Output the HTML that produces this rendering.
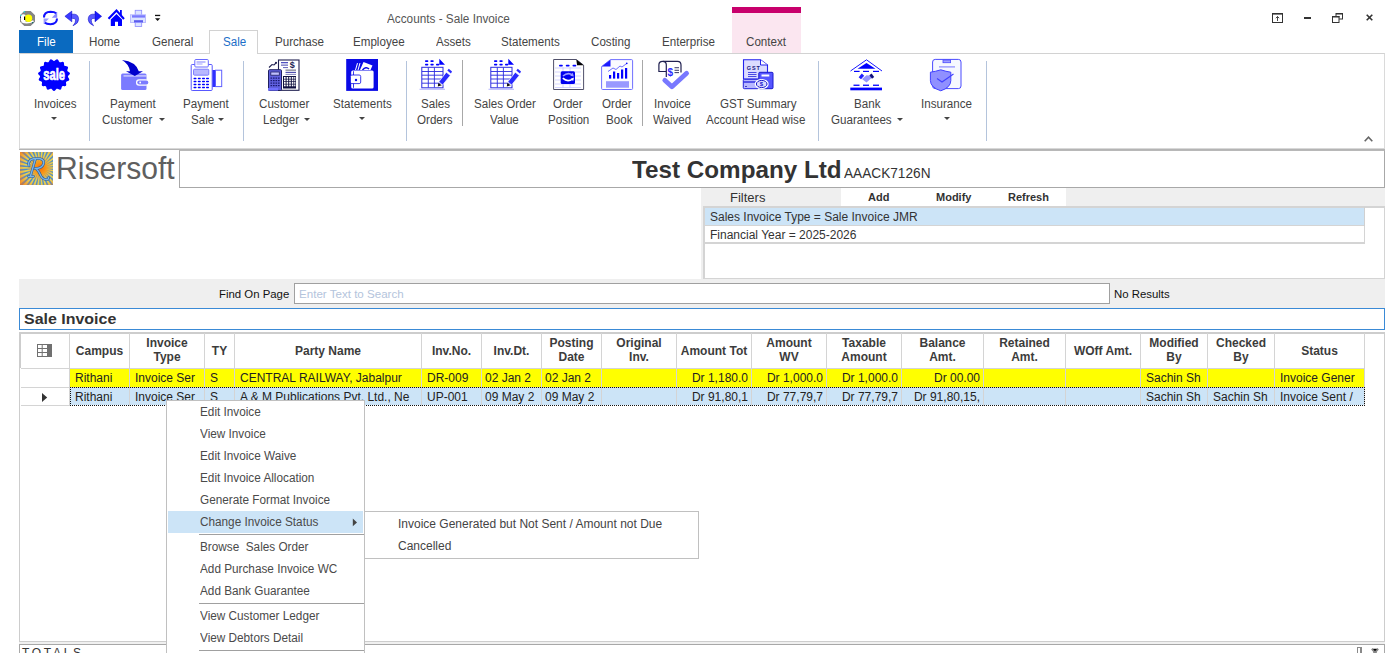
<!DOCTYPE html>
<html><head><meta charset="utf-8">
<style>
*{box-sizing:border-box;margin:0;padding:0}
html,body{width:1397px;height:653px;overflow:hidden;background:#fff;font-family:"Liberation Sans",sans-serif;position:relative}
.a{position:absolute}
.t{position:absolute;white-space:nowrap;line-height:1}
svg{position:absolute;overflow:visible}
.tab{position:absolute;top:35.5px;font-size:12px;color:#444;white-space:nowrap;line-height:1;transform:scaleX(0.967);transform-origin:0 0}
.rl{position:absolute;font-size:12px;color:#444;white-space:nowrap;line-height:1;transform:scaleX(0.967);transform-origin:0 0}
.sep{position:absolute;top:61px;width:1px;height:80px;background:#b4c4dc}
.sepg{position:absolute;top:60px;width:1px;height:66px;background:#a8a8a8}
.dd{position:absolute;width:0;height:0;border-left:3px solid transparent;border-right:3px solid transparent;border-top:3px solid #444}
.gh{position:absolute;font-size:12px;font-weight:bold;color:#3c3c3c;text-align:center;line-height:14.4px;white-space:nowrap}
.gc{position:absolute;font-size:12px;color:#222;white-space:nowrap;line-height:1}
.vl{position:absolute;top:333px;width:1px;height:73px;background:#d4d4d4}
.mi{position:absolute;left:200px;font-size:12px;color:#4a4a4a;white-space:nowrap;line-height:1;transform:scaleX(0.98);transform-origin:0 0}
</style></head><body>

<!-- ===== Title bar ===== -->
<div class="t" style="left:387px;top:12.5px;font-size:12px;color:#555;transform:scaleX(0.98);transform-origin:0 0">Accounts - Sale Invoice</div>

<!-- QAT icons -->
<svg style="left:20px;top:11px" width="15" height="15" viewBox="0 0 15 15">
  <polygon points="4.3,0 10.7,0 15,4.3 15,10.7 10.7,15 4.3,15 0,10.7 0,4.3" fill="#858585"/>
  <path d="M1,4 Q3.5,2.5 5.5,4 L5.5,11 Q3,11.5 1,10 Z" fill="#fff"/>
  <path d="M1.5,10.5 Q7,13 13.5,10" stroke="#fff" stroke-width="1.6" fill="none"/>
  <circle cx="8.5" cy="7.3" r="3.7" fill="#ffff00"/>
  <rect x="4" y="5.5" width="1.2" height="3.5" fill="#000"/>
  <rect x="3.7" y="0.2" width="1.3" height="1.3" fill="#20e0f0"/>
  <rect x="0.2" y="3.7" width="1.3" height="1.3" fill="#20e0f0"/>
  <rect x="0" y="5.8" width="1" height="1" fill="#101080"/>
  <rect x="12" y="11" width="1.2" height="1.2" fill="#107070"/>
</svg>
<svg style="left:43px;top:11px" width="15" height="14" viewBox="0 0 15 14">
  <path d="M1,6.5 Q1,1 7.5,0.8 Q11.5,0.8 13.5,2.5" stroke="#1010ff" stroke-width="2" fill="none"/>
  <polygon points="14.2,1 14.2,6.8 8.8,6.8" fill="#8a8aff"/>
  <path d="M14,7.5 Q14,13 7.5,13.2 Q3.5,13.2 1.5,11.5" stroke="#1010ff" stroke-width="2" fill="none"/>
  <polygon points="0.6,7.5 6,7.5 0.6,13" fill="#9a9aff"/>
</svg>
<svg style="left:64px;top:10px" width="16" height="17" viewBox="0 0 16 17">
  <polygon points="0.9,6.3 7.8,1.1 7.8,11.8" fill="#3a3aff" stroke="#0000c0" stroke-width="0.5"/>
  <path d="M7.5,4.2 L10.5,4.2 Q14.6,4.5 14.6,9.5 Q14.6,13.5 9,15.8 Q11.8,12.5 11.6,10 Q11.3,8 7.5,8.3 Z" fill="#5a5aff" stroke="#0000c0" stroke-width="0.5"/>
</svg>
<svg style="left:86px;top:10px" width="16" height="17" viewBox="0 0 16 17">
  <polygon points="15.6,6.3 9,1.1 9,11.8" fill="#1a1aff" stroke="#0000c0" stroke-width="0.5"/>
  <path d="M9.3,4.2 L6.5,4.2 Q2.2,4.5 2.2,9.5 Q2.2,13.5 7.6,15.8 Q5,12.5 5.2,10 Q5.5,8 9.3,8.3 Z" fill="#5a5aff" stroke="#0000c0" stroke-width="0.5"/>
</svg>
<svg style="left:108px;top:10px" width="17" height="17" viewBox="0 0 17 17">
  <path d="M0.5,8.8 L8.5,0.5 L16,9" stroke="#0000ff" stroke-width="2.1" fill="none"/>
  <rect x="12" y="0" width="1.8" height="5.5" fill="#0000ff"/>
  <path d="M2.8,9.6 L8.5,3.9 L14,9.6 L14,16 L10,16 L10,11.8 L7,11.8 L7,16 L2.8,16 Z" fill="#0000ff"/>
</svg>
<svg style="left:130px;top:10px" width="16" height="17" viewBox="0 0 16 17">
  <rect x="5.2" y="0.3" width="6.5" height="5" fill="#dce4ff" stroke="#8a8aff" stroke-width="0.8"/>
  <rect x="0.4" y="4.8" width="15.2" height="7.7" fill="#dce4ff" stroke="#b0b0ff" stroke-width="0.8"/>
  <rect x="2" y="5.2" width="13" height="2.4" fill="#7a7aff"/>
  <rect x="4" y="10.2" width="9" height="2.3" fill="#5a5aee"/>
  <rect x="5.2" y="12.5" width="6.5" height="4" fill="#dce4ff" stroke="#8a8aff" stroke-width="0.8"/>
</svg>
<svg style="left:154px;top:14px" width="7" height="8" viewBox="0 0 7 8">
  <rect x="1" y="0.8" width="5.2" height="1.3" fill="#111"/>
  <polygon points="1,4.2 6.2,4.2 3.6,7.1" fill="#111"/>
</svg>

<!-- window controls -->
<svg style="left:1272px;top:13px" width="11" height="10" viewBox="0 0 11 10">
  <rect x="0.5" y="0.5" width="10" height="9" fill="none" stroke="#333" stroke-width="1"/>
  <rect x="0" y="0" width="11" height="1.6" fill="#333"/>
  <path d="M5.5,8 L5.5,3.5 M3.8,5.2 L5.5,3.5 L7.2,5.2" stroke="#333" stroke-width="0.9" fill="none"/>
</svg>
<div class="a" style="left:1304px;top:17px;width:7px;height:2px;background:#333"></div>
<svg style="left:1332px;top:13px" width="11" height="10" viewBox="0 0 11 10">
  <rect x="4" y="0.5" width="6.5" height="5.5" fill="none" stroke="#333" stroke-width="1"/>
  <rect x="4" y="0" width="7" height="1.5" fill="#333"/>
  <rect x="0.5" y="3.5" width="6.5" height="6" fill="#fff" stroke="#333" stroke-width="1"/>
  <rect x="0" y="3" width="7.5" height="1.5" fill="#333"/>
</svg>
<svg style="left:1366px;top:14px" width="7" height="7" viewBox="0 0 7 7">
  <path d="M0.7,0.7 L6.3,6.3 M6.3,0.7 L0.7,6.3" stroke="#333" stroke-width="1.6"/>
</svg>

<!-- ===== Tabs ===== -->
<div class="a" style="left:732px;top:7px;width:69px;height:46px;background:#fbe6f0"></div>
<div class="a" style="left:732px;top:7px;width:69px;height:6px;background:#c8006c"></div>
<div class="a" style="left:19px;top:30px;width:54px;height:23px;background:#0a6ac0"></div>
<div class="tab" style="left:37px;color:#fff">File</div>
<div class="tab" style="left:89px">Home</div>
<div class="tab" style="left:152px">General</div>
<div class="tab" style="left:275px">Purchase</div>
<div class="tab" style="left:353px">Employee</div>
<div class="tab" style="left:436px">Assets</div>
<div class="tab" style="left:501px">Statements</div>
<div class="tab" style="left:591px">Costing</div>
<div class="tab" style="left:662px">Enterprise</div>
<div class="tab" style="left:746px">Context</div>

<!-- ===== Ribbon ===== -->
<div class="a" style="left:19px;top:53px;width:1366px;height:96px;border:1px solid #dadada;border-top-color:#d2d2d2;border-bottom:none;background:#fff"></div>
<div class="a" style="left:19px;top:148px;width:1366px;height:1px;background:#d8d8d8"></div><div class="a" style="left:19px;top:149px;width:1366px;height:1px;background:#b4b4b4"></div>
<div class="a" style="left:209px;top:30px;width:49px;height:24px;border:1px solid #d2d2d2;border-bottom:none;background:#fff"></div>
<div class="tab" style="left:223px;color:#1a6ec8">Sale</div>

<!-- separators -->
<div class="sep" style="left:89px"></div>
<div class="sep" style="left:243px"></div>
<div class="sep" style="left:406px"></div>
<div class="sepg" style="left:462px"></div>
<div class="sepg" style="left:642px"></div>
<div class="sep" style="left:818px"></div>
<div class="sep" style="left:986px"></div>

<!-- sale badge -->
<svg style="left:38px;top:59px" width="32" height="32" viewBox="0 0 32 32">
  <polygon fill="#0000ff" points="16.00,2.00 16.29,1.95 16.59,1.82 16.90,1.62 17.23,1.36 17.57,1.08 17.92,0.81 18.28,0.58 18.64,0.41 18.99,0.33 19.33,0.35 19.64,0.47 19.93,0.69 20.19,0.99 20.42,1.34 20.64,1.73 20.83,2.13 21.02,2.49 21.22,2.81 21.44,3.05 21.69,3.21 21.98,3.29 22.31,3.29 22.68,3.23 23.08,3.13 23.50,3.01 23.93,2.91 24.35,2.84 24.75,2.83 25.10,2.90 25.40,3.06 25.64,3.29 25.82,3.61 25.94,3.99 26.00,4.41 26.04,4.85 26.06,5.29 26.08,5.70 26.14,6.07 26.24,6.38 26.40,6.63 26.63,6.82 26.93,6.95 27.29,7.05 27.70,7.12 28.14,7.18 28.57,7.26 28.98,7.37 29.35,7.53 29.64,7.74 29.86,8.00 29.98,8.32 30.01,8.68 29.96,9.07 29.85,9.48 29.70,9.90 29.54,10.31 29.40,10.69 29.30,11.05 29.27,11.38 29.31,11.67 29.45,11.94 29.67,12.18 29.96,12.42 30.30,12.65 30.67,12.88 31.04,13.13 31.37,13.40 31.64,13.69 31.83,14.00 31.91,14.33 31.90,14.67 31.78,15.01 31.57,15.35 31.31,15.68 31.00,16.00 30.69,16.31 30.40,16.60 30.16,16.89 30.00,17.18 29.92,17.46 29.94,17.76 30.04,18.07 30.21,18.40 30.43,18.75 30.67,19.12 30.90,19.50 31.10,19.88 31.23,20.25 31.27,20.61 31.22,20.94 31.06,21.25 30.82,21.51 30.49,21.74 30.11,21.93 29.70,22.10 29.29,22.26 28.91,22.41 28.58,22.57 28.31,22.77 28.12,23.00 28.02,23.28 27.98,23.60 28.00,23.98 28.06,24.38 28.14,24.82 28.19,25.26 28.22,25.68 28.18,26.08 28.07,26.42 27.89,26.71 27.63,26.92 27.30,27.06 26.91,27.14 26.48,27.16 26.04,27.15 25.60,27.12 25.19,27.10 24.81,27.12 24.49,27.19 24.23,27.33 24.02,27.54 23.85,27.82 23.72,28.17 23.61,28.57 23.50,28.99 23.38,29.42 23.22,29.81 23.03,30.16 22.79,30.43 22.51,30.62 22.18,30.70 21.82,30.70 21.43,30.61 21.03,30.46 20.64,30.27 20.25,30.06 19.88,29.88 19.53,29.75 19.21,29.68 18.91,29.69 18.63,29.80 18.37,29.99 18.11,30.26 17.84,30.58 17.57,30.92 17.28,31.26 16.98,31.56 16.66,31.80 16.33,31.95 16.00,32.00 15.67,31.95 15.34,31.80 15.02,31.56 14.72,31.26 14.43,30.92 14.16,30.58 13.89,30.26 13.63,29.99 13.37,29.80 13.09,29.69 12.79,29.68 12.47,29.75 12.12,29.88 11.75,30.06 11.36,30.27 10.97,30.46 10.57,30.61 10.18,30.70 9.82,30.70 9.49,30.62 9.21,30.43 8.97,30.16 8.78,29.81 8.62,29.42 8.50,28.99 8.39,28.57 8.28,28.17 8.15,27.82 7.98,27.54 7.77,27.33 7.51,27.19 7.19,27.12 6.81,27.10 6.40,27.12 5.96,27.15 5.52,27.16 5.09,27.14 4.70,27.06 4.37,26.92 4.11,26.71 3.93,26.42 3.82,26.08 3.78,25.68 3.81,25.26 3.86,24.82 3.94,24.38 4.00,23.98 4.02,23.60 3.98,23.28 3.88,23.00 3.69,22.77 3.42,22.57 3.09,22.41 2.71,22.26 2.30,22.10 1.89,21.93 1.51,21.74 1.18,21.51 0.94,21.25 0.78,20.94 0.73,20.61 0.77,20.25 0.90,19.88 1.10,19.50 1.33,19.12 1.57,18.75 1.79,18.40 1.96,18.07 2.06,17.76 2.08,17.46 2.00,17.18 1.84,16.89 1.60,16.60 1.31,16.31 1.00,16.00 0.69,15.68 0.43,15.35 0.22,15.01 0.10,14.67 0.09,14.33 0.17,14.00 0.36,13.69 0.63,13.40 0.96,13.13 1.33,12.88 1.70,12.65 2.04,12.42 2.33,12.18 2.55,11.94 2.69,11.67 2.73,11.38 2.70,11.05 2.60,10.69 2.46,10.31 2.30,9.90 2.15,9.48 2.04,9.07 1.99,8.68 2.02,8.32 2.14,8.00 2.36,7.74 2.65,7.53 3.02,7.37 3.43,7.26 3.86,7.18 4.30,7.12 4.71,7.05 5.07,6.95 5.37,6.82 5.60,6.63 5.76,6.38 5.86,6.07 5.92,5.70 5.94,5.29 5.96,4.85 6.00,4.41 6.06,3.99 6.18,3.61 6.36,3.29 6.60,3.06 6.90,2.90 7.25,2.83 7.65,2.84 8.07,2.91 8.50,3.01 8.92,3.13 9.32,3.23 9.69,3.29 10.02,3.29 10.31,3.21 10.56,3.05 10.78,2.81 10.98,2.49 11.17,2.13 11.36,1.73 11.58,1.34 11.81,0.99 12.07,0.69 12.36,0.47 12.67,0.35 13.01,0.33 13.36,0.41 13.72,0.58 14.08,0.81 14.43,1.08 14.77,1.36 15.10,1.62 15.41,1.82 15.71,1.95"/>
  <text x="16.2" y="20.8" font-family="Liberation Sans" font-weight="bold" font-size="16.5" fill="#fff" stroke="#fff" stroke-width="0.7" text-anchor="middle" transform="translate(16.2 0) scale(0.68 1) translate(-16.2 0)">sale</text>
</svg>
<div class="rl" style="left:34px;top:98px">Invoices</div>
<div class="dd" style="left:51px;top:117px"></div>

<!-- Payment Customer -->
<svg style="left:115px;top:55px" width="40" height="40" viewBox="0 0 40 40">
  <rect x="6.1" y="18.4" width="25.4" height="16.6" rx="1.5" fill="#7b7bff"/>
  <rect x="8.5" y="20.5" width="23" height="0.9" fill="#fff"/>
  <rect x="21" y="24.3" width="12.5" height="6.4" rx="3" fill="#fff"/>
  <rect x="22.3" y="25.4" width="11" height="4.2" rx="2" fill="#7b7bff"/>
  <circle cx="25.2" cy="27.5" r="0.9" fill="#fff"/>
  <path d="M7,4.9 Q21,6.5 23.8,16.3 L28,16.3 L19.8,21 L11,16.3 L15,16.3 Q14,9 7,4.9 Z" fill="#0000cc"/>
</svg>
<div class="rl" style="left:110px;top:98px">Payment</div>
<div class="rl" style="left:102px;top:114px">Customer</div>
<div class="dd" style="left:159px;top:118px"></div>

<!-- Payment Sale -->
<svg style="left:186px;top:55px" width="40" height="40" viewBox="0 0 40 40">
  <rect x="5.2" y="9.5" width="21" height="26" rx="1" fill="#fff" stroke="#5858ff" stroke-width="1"/>
  <rect x="8.8" y="4.5" width="13.5" height="7.5" rx="1" fill="#fff" stroke="#6a6aff" stroke-width="1"/>
  <rect x="10.5" y="6.5" width="9" height="1" fill="#8080ff"/>
  <rect x="10.5" y="8.5" width="6" height="1" fill="#a0a0ff"/>
  <rect x="7.5" y="14.2" width="15.3" height="6" rx="1" fill="#b8b8ff" stroke="#6a6aff" stroke-width="0.8"/>
  <g fill="#0000ff">
    <rect x="7.5" y="22.8" width="3" height="1.4" rx="0.6"/><rect x="11.8" y="22.8" width="3" height="1.4" rx="0.6"/><rect x="16" y="22.8" width="3" height="1.4" rx="0.6"/><rect x="20" y="22.8" width="3" height="1.4" rx="0.6"/>
    <rect x="7.5" y="25.8" width="3" height="1.4" rx="0.6"/><rect x="11.8" y="25.8" width="3" height="1.4" rx="0.6"/><rect x="16" y="25.8" width="3" height="1.4" rx="0.6"/><rect x="20" y="25.8" width="3" height="1.4" rx="0.6"/>
    <rect x="7.5" y="28.8" width="3" height="1.4" rx="0.6"/><rect x="11.8" y="28.8" width="3" height="1.4" rx="0.6"/><rect x="16" y="28.8" width="3" height="1.4" rx="0.6"/><rect x="20" y="28.8" width="3" height="1.4" rx="0.6"/>
    <rect x="7.5" y="31.8" width="3" height="1.4" rx="0.6"/><rect x="11.8" y="31.8" width="3" height="1.4" rx="0.6"/><rect x="16" y="31.8" width="3" height="1.4" rx="0.6"/><rect x="20" y="31.8" width="3" height="1.4" rx="0.6"/>
  </g>
  <rect x="26.5" y="15" width="2.5" height="17" fill="#3030ff"/>
  <rect x="29.5" y="15.2" width="6.2" height="16.4" fill="#fff" stroke="#6060ff" stroke-width="1"/>
</svg>
<div class="rl" style="left:183px;top:98px">Payment</div>
<div class="rl" style="left:191px;top:114px">Sale</div>
<div class="dd" style="left:218px;top:118px"></div>

<!-- Customer Ledger -->
<svg style="left:264px;top:55px" width="40" height="40" viewBox="0 0 40 40">
  <rect x="14.5" y="5" width="20.5" height="30.3" fill="#fff" stroke="#202050" stroke-width="1.1"/>
  <rect x="17" y="7" width="7" height="1.3" fill="#5050c0"/>
  <rect x="17" y="9.5" width="7" height="1.3" fill="#7070c0"/>
  <rect x="19" y="12" width="5" height="1.1" fill="#7070c0"/>
  <text x="25.8" y="13.2" font-family="Liberation Sans" font-weight="bold" font-size="9" fill="#1a1a50">$</text>
  <rect x="21.5" y="14.5" width="10.5" height="1.3" fill="#808090"/>
  <rect x="21.5" y="16.8" width="10.5" height="1.3" fill="#5050b0"/>
  <rect x="21.5" y="19" width="10.5" height="1" fill="#9090c0"/>
  <rect x="19" y="21" width="13" height="12.5" fill="#101040"/>
  <g fill="#fff">
    <rect x="20" y="22" width="1.6" height="1.8"/><rect x="22.6" y="22" width="1.6" height="1.8"/><rect x="25.2" y="22" width="1.6" height="1.8"/><rect x="27.8" y="22" width="1.6" height="1.8"/><rect x="30.2" y="22" width="1.2" height="1.8"/>
    <rect x="20" y="24.5" width="1.6" height="1.8"/><rect x="22.6" y="24.5" width="1.6" height="1.8"/><rect x="25.2" y="24.5" width="1.6" height="1.8"/><rect x="27.8" y="24.5" width="1.6" height="1.8"/><rect x="30.2" y="24.5" width="1.2" height="1.8"/>
    <rect x="20" y="27" width="1.6" height="1.8"/><rect x="22.6" y="27" width="1.6" height="1.8"/><rect x="25.2" y="27" width="1.6" height="1.8"/><rect x="27.8" y="27" width="1.6" height="1.8"/><rect x="30.2" y="27" width="1.2" height="1.8"/>
    <rect x="20" y="29.5" width="1.6" height="1.8"/><rect x="22.6" y="29.5" width="1.6" height="1.8"/><rect x="25.2" y="29.5" width="1.6" height="1.8"/><rect x="27.8" y="29.5" width="1.6" height="1.8"/><rect x="30.2" y="29.5" width="1.2" height="1.8"/>
  </g>
  <path d="M5,12.5 L8,9.5 L10,10 L12.5,7.5" stroke="#202050" stroke-width="1.1" fill="none"/>
  <circle cx="12" cy="7.7" r="1" fill="#202050"/>
  <rect x="4.5" y="14.7" width="13" height="20.8" rx="1" fill="#6060e0" stroke="#202060" stroke-width="1"/>
  <rect x="6.8" y="17" width="8.5" height="3.2" fill="#c0c0ff" stroke="#202060" stroke-width="0.8"/>
  <g fill="#1a1a70">
    <rect x="6.5" y="22.5" width="1.6" height="1.2"/><rect x="9" y="22.5" width="1.6" height="1.2"/><rect x="11.5" y="22.5" width="1.6" height="1.2"/><rect x="14" y="22.5" width="1.6" height="1.2"/>
    <rect x="6.5" y="25" width="1.6" height="1.2"/><rect x="9" y="25" width="1.6" height="1.2"/><rect x="11.5" y="25" width="1.6" height="1.2"/><rect x="14" y="25" width="1.6" height="1.2"/>
    <rect x="6.5" y="27.5" width="1.6" height="1.2"/><rect x="9" y="27.5" width="1.6" height="1.2"/><rect x="11.5" y="27.5" width="1.6" height="1.2"/><rect x="14" y="27.5" width="1.6" height="1.2"/>
    <rect x="6.5" y="30" width="1.6" height="1.2"/><rect x="9" y="30" width="1.6" height="1.2"/><rect x="11.5" y="30" width="1.6" height="1.2"/><rect x="14" y="30" width="1.6" height="1.2"/>
  </g>
  <rect x="4" y="33" width="10" height="2.6" fill="#7070ff"/>
</svg>
<div class="rl" style="left:259px;top:98px">Customer</div>
<div class="rl" style="left:263px;top:114px">Ledger</div>
<div class="dd" style="left:304px;top:118px"></div>

<!-- Statements -->
<svg style="left:342px;top:55px" width="40" height="40" viewBox="0 0 40 40">
  <rect x="4.2" y="4" width="31.8" height="31.9" fill="#0a0ae6"/>
  <path d="M13,15 L15,8 L16,8.3 L14,15 Z M15.5,15 L17.5,8 L18.5,8.3 L16.5,15 Z" fill="#fff"/>
  <path d="M18,15 L21.5,7 L30.5,10.5 L28.5,15 Z" fill="#fff"/>
  <path d="M20.5,15 Q24,11 27,14" stroke="#0a0ae6" stroke-width="1.5" fill="none"/>
  <rect x="9.2" y="15.6" width="22.4" height="17.8" rx="1.5" fill="#fff"/>
  <rect x="11.2" y="16.2" width="0.8" height="16.6" fill="#0a0ae6"/>
  <rect x="8.4" y="20" width="10.3" height="8.6" rx="1.5" fill="#fff" stroke="#0a0ae6" stroke-width="0.8"/>
  <circle cx="14" cy="25" r="1.2" fill="#0a0ae6"/>
</svg>
<div class="rl" style="left:333px;top:98px">Statements</div>
<div class="dd" style="left:359px;top:117px"></div>

<!-- Sales Orders -->
<svg id="so1" style="left:415px;top:55px" width="40" height="40" viewBox="0 0 40 40">
  <g fill="#0000ff">
    <rect x="10" y="5.3" width="3.3" height="1.6" rx="0.7"/><rect x="15.4" y="5.3" width="3.3" height="1.6" rx="0.7"/>
    <rect x="10" y="8.8" width="3.3" height="1.6" rx="0.7"/><rect x="15.4" y="8.8" width="3.3" height="1.6" rx="0.7"/>
    <rect x="21" y="8.8" width="3.3" height="1.6" rx="0.7"/>
    <polygon points="24.3,3.8 30,9.8 24.3,9.8"/>
  </g>
  <rect x="6.8" y="12.3" width="21.2" height="20.5" fill="#fff" stroke="#2a2ae0" stroke-width="1"/>
  <g stroke="#2a2ae0" stroke-width="0.9">
    <line x1="7" y1="16.5" x2="28" y2="16.5"/><line x1="7" y1="20.2" x2="28" y2="20.2"/><line x1="7" y1="24" x2="28" y2="24"/><line x1="7" y1="28.2" x2="28" y2="28.2"/>
    <line x1="13.3" y1="12.5" x2="13.3" y2="32.5"/><line x1="19.4" y1="12.5" x2="19.4" y2="32.5"/>
  </g>
  <rect x="4.5" y="33.8" width="25.5" height="0.8" fill="#a0a0ff"/>
  <path d="M23.8,26.8 L31.3,17.2 L35.3,20.4 L27.6,30 Z" fill="#2a2aff" stroke="#fff" stroke-width="0.7"/>
  <path d="M32.3,15.6 L33.8,13.8 L37,16.5 L35.9,18.5 Z" fill="#2a2aff"/>
  <polygon points="23.3,28 26.8,30.2 22.8,31.5" fill="#111"/>
</svg>
<div class="rl" style="left:421px;top:98px">Sales</div>
<div class="rl" style="left:417px;top:114px">Orders</div>

<!-- Sales Order Value -->
<svg style="left:484px;top:55px" width="40" height="40" viewBox="0 0 40 40">
  <g fill="#0000ff">
    <rect x="10" y="5.3" width="3.3" height="1.6" rx="0.7"/><rect x="15.4" y="5.3" width="3.3" height="1.6" rx="0.7"/>
    <rect x="10" y="8.8" width="3.3" height="1.6" rx="0.7"/><rect x="15.4" y="8.8" width="3.3" height="1.6" rx="0.7"/>
    <rect x="21" y="8.8" width="3.3" height="1.6" rx="0.7"/>
    <polygon points="24.3,3.8 30,9.8 24.3,9.8"/>
  </g>
  <rect x="6.8" y="12.3" width="21.2" height="20.5" fill="#fff" stroke="#2a2ae0" stroke-width="1"/>
  <g stroke="#2a2ae0" stroke-width="0.9">
    <line x1="7" y1="16.5" x2="28" y2="16.5"/><line x1="7" y1="20.2" x2="28" y2="20.2"/><line x1="7" y1="24" x2="28" y2="24"/><line x1="7" y1="28.2" x2="28" y2="28.2"/>
    <line x1="13.3" y1="12.5" x2="13.3" y2="32.5"/><line x1="19.4" y1="12.5" x2="19.4" y2="32.5"/>
  </g>
  <rect x="4.5" y="33.8" width="25.5" height="0.8" fill="#a0a0ff"/>
  <path d="M23.8,26.8 L31.3,17.2 L35.3,20.4 L27.6,30 Z" fill="#2a2aff" stroke="#fff" stroke-width="0.7"/>
  <path d="M32.3,15.6 L33.8,13.8 L37,16.5 L35.9,18.5 Z" fill="#2a2aff"/>
  <polygon points="23.3,28 26.8,30.2 22.8,31.5" fill="#111"/>
</svg>
<div class="rl" style="left:474px;top:98px">Sales Order</div>
<div class="rl" style="left:490px;top:114px">Value</div>

<!-- Order Position -->
<svg style="left:548px;top:55px" width="40" height="40" viewBox="0 0 40 40">
  <path d="M5.6,4.5 L28.3,4.5 L35.6,10.2 L35.6,34.5 L5.6,34.5 Z" fill="#fff" stroke="#50506a" stroke-width="1"/>
  <polygon points="28.3,4.5 35.6,10.2 29,10.2" fill="#000"/>
  <g stroke="#c8c8ff" stroke-width="0.8">
    <line x1="7" y1="13" x2="33" y2="13"/><line x1="7" y1="17" x2="33" y2="17"/><line x1="7" y1="21" x2="33" y2="21"/><line x1="7" y1="25" x2="33" y2="25"/><line x1="7" y1="29" x2="33" y2="29"/><line x1="7" y1="32.5" x2="33" y2="32.5"/>
    <line x1="15" y1="12" x2="15" y2="33"/><line x1="22" y1="12" x2="22" y2="33"/>
  </g>
  <g fill="#0000ff"><rect x="11" y="9.8" width="3.8" height="1.7" rx="0.8"/><rect x="17.8" y="9.8" width="3.8" height="1.7" rx="0.8"/><rect x="24.5" y="9.8" width="3.8" height="1.7" rx="0.8"/></g>
  <rect x="12.7" y="16.2" width="14.3" height="12.8" rx="1.5" fill="#0000ee"/>
  <path d="M15,21 Q19.8,16.8 24.5,20" stroke="#9a9aff" stroke-width="1.6" fill="none"/>
  <polygon points="24.8,17.8 25.8,21.5 22.2,20.8" fill="#9a9aff"/>
  <path d="M14.8,23.2 Q19.5,27.6 24.8,23.8" stroke="#fff" stroke-width="1.6" fill="none"/>
  <polygon points="26,22.5 25.2,26 22.5,24" fill="#fff"/>
</svg>
<div class="rl" style="left:553px;top:98px">Order</div>
<div class="rl" style="left:548px;top:114px">Position</div>

<!-- Order Book -->
<svg style="left:597px;top:55px" width="40" height="40" viewBox="0 0 40 40">
  <path d="M13.5,4.6 L34.5,4.6 Q35.6,4.6 35.6,5.7 L35.6,33.5 Q35.6,34.5 34.5,34.5 L5.6,34.5 Q4.6,34.5 4.6,33.5 L4.6,11.5 Z" fill="#fbfbff" stroke="#7070ff" stroke-width="1"/>
  <polygon points="4.8,11.5 13.5,4.8 13.5,11.5" fill="#1a1aff"/>
  <g fill="#0000ff">
    <rect x="12" y="20" width="2.2" height="3.6"/><rect x="16" y="16.5" width="2.2" height="7.1"/><rect x="20" y="18" width="2.2" height="5.6"/><rect x="24" y="14.5" width="2.2" height="9.1"/><rect x="28" y="13" width="2.2" height="10.6"/>
  </g>
  <path d="M11,16.5 L16,13 L19,14.5 L23,11 L25,12 L30,8.2" stroke="#3030ff" stroke-width="0.7" fill="none"/>
  <circle cx="29.8" cy="8.4" r="0.8" fill="#0000ff"/>
  <rect x="9" y="26.2" width="23" height="6.5" fill="#9898ff"/>
</svg>
<div class="rl" style="left:602px;top:98px">Order</div>
<div class="rl" style="left:606px;top:114px">Book</div>

<!-- Invoice Waived -->
<svg style="left:654px;top:55px" width="40" height="40" viewBox="0 0 40 40">
  <path d="M12.3,22 L12.3,9.8 Q12.3,6.3 8.6,6.3 Q4.9,6.3 4.9,9.8 L4.9,16.5 L12.3,16.5" fill="#fff" stroke="#202050" stroke-width="1.2"/>
  <path d="M9,6.3 L23.5,6.3 Q27,6.3 27,10 L27,17.5" fill="none" stroke="#202050" stroke-width="1.2"/>
  <text x="13.6" y="21" font-family="Liberation Sans" font-weight="bold" font-size="10" fill="#2a2aff">$</text>
  <g fill="#202050"><rect x="20.5" y="12.3" width="4.5" height="0.9"/><rect x="20.5" y="14.8" width="4.5" height="0.9"/><rect x="20.5" y="17.2" width="4.5" height="0.9"/></g>
  <path d="M10.8,25.3 L17.9,31.8 L32.6,18.3" stroke="#7878ff" stroke-width="4.8" stroke-linecap="round" stroke-linejoin="round" fill="none"/>
</svg>
<div class="rl" style="left:654px;top:98px">Invoice</div>
<div class="rl" style="left:653px;top:114px">Waived</div>

<!-- GST -->
<svg style="left:738px;top:55px" width="40" height="40" viewBox="0 0 40 40">
  <path d="M5.5,4.8 L22.5,4.8 L29.5,10 L29.5,24 L5.5,24 Z" fill="#dcdcff" stroke="#2222ee" stroke-width="1.1"/>
  <path d="M22.5,4.8 L22.5,10 L29.5,10" fill="#fff" stroke="#2222ee" stroke-width="1"/>
  <text x="8.8" y="15.2" font-family="Liberation Sans" font-weight="bold" font-size="5.5" fill="#202080" letter-spacing="0.9">GST</text>
  <g fill="#3a3ae0"><rect x="10" y="17" width="8.5" height="0.9"/><rect x="10" y="19" width="8.5" height="0.9"/><rect x="10" y="21" width="8.5" height="0.9"/></g>
  <rect x="5.3" y="24.3" width="15" height="9.4" rx="1" fill="#b8b8ff" stroke="#2222dd" stroke-width="1"/>
  <rect x="5.5" y="26.3" width="14.5" height="1.4" fill="#2a2ae0"/>
  <rect x="7" y="31" width="2" height="0.8" fill="#2222aa"/>
  <rect x="20.8" y="17.3" width="14.2" height="16.4" rx="1" fill="#5555ff" stroke="#1a1acc" stroke-width="1"/>
  <rect x="23.5" y="19.5" width="7.8" height="2" fill="#fff"/>
  <ellipse cx="23.7" cy="29" rx="6.2" ry="4.3" fill="#d8d8ff" stroke="#fff" stroke-width="1.6"/>
  <ellipse cx="23.7" cy="29" rx="5.3" ry="3.6" fill="#d8d8ff" stroke="#1a1acc" stroke-width="1"/>
  <text x="21.8" y="31.4" font-family="Liberation Sans" font-weight="bold" font-size="6" fill="#1a1acc">$</text>
</svg>
<div class="rl" style="left:720px;top:98px">GST Summary</div>
<div class="rl" style="left:706px;top:114px">Account Head wise</div>

<!-- Bank Guarantees -->
<svg style="left:846px;top:55px" width="40" height="40" viewBox="0 0 40 40">
  <polyline points="4.5,16 20.5,4.8 36,16" fill="none" stroke="#1a1aff" stroke-width="1"/>
  <polygon points="11.5,13.8 20.5,8 29.5,13.8" fill="#0000ff"/>
  <g fill="#0000ff">
    <rect x="8" y="15.8" width="5.6" height="1.2"/><rect x="17" y="15.8" width="6" height="1.2"/><rect x="27" y="15.8" width="6" height="1.2"/>
    <rect x="7.5" y="29.6" width="6" height="1.3"/><rect x="17" y="29.6" width="6" height="1.3"/><rect x="27" y="29.6" width="6" height="1.3"/>
    <rect x="4.3" y="32.6" width="31.7" height="2.7"/>
  </g>
  <polygon points="16,24 20.5,20.3 24.8,20.8 25.3,23.2 20.5,27.6" fill="#9494ff"/>
  <polygon points="12.6,22.2 15.8,18.6 18.2,20.8 15,24.2" fill="#2020ff"/>
  <polygon points="23.4,20.2 25.6,18.4 28.2,22 26,23.8" fill="#10107a"/>
</svg>
<div class="rl" style="left:854px;top:98px">Bank</div>
<div class="rl" style="left:831px;top:114px">Guarantees</div>
<div class="dd" style="left:897px;top:118px"></div>

<!-- Insurance -->
<svg style="left:925px;top:55px" width="40" height="40" viewBox="0 0 40 40">
  <rect x="7.6" y="4.4" width="28.4" height="29.2" rx="2.6" fill="#f6f8ff" stroke="#4a4aff" stroke-width="1"/>
  <rect x="18" y="5" width="7.6" height="2.7" fill="#a0a0ff" stroke="#4a4aff" stroke-width="0.8"/>
  <rect x="14" y="11.3" width="16" height="1.2" fill="#8a8aff"/>
  <path d="M5.4,17.2 Q10.5,16.5 15.8,14.8 Q21,16.5 25.8,17.2 L25.8,25.5 Q25.8,32.5 15.8,35.8 Q5.4,32.5 5.4,25.5 Z" fill="#9090ff" stroke="#4040ff" stroke-width="1"/>
  <path d="M12,23.5 L17,27 L28.5,19" stroke="#4040ff" stroke-width="1.1" fill="none"/>
</svg>
<div class="rl" style="left:921px;top:98px">Insurance</div>
<div class="dd" style="left:944px;top:117px"></div>

<!-- collapse chevron -->
<svg style="left:1364px;top:136px" width="9" height="6" viewBox="0 0 9 6">
  <path d="M0.7,5.3 L4.5,1.2 L8.3,5.3" stroke="#666" stroke-width="1.6" fill="none"/>
</svg>

<!-- ===== Company header ===== -->
<svg style="left:20px;top:152px;overflow:hidden" width="33" height="33" viewBox="0 0 33 33">
  <defs>
    <radialGradient id="sunc" cx="0.609" cy="0.485" r="0.42">
      <stop offset="0" stop-color="#ff6a00" stop-opacity="1"/><stop offset="0.45" stop-color="#ff9a10" stop-opacity="0.9"/><stop offset="1" stop-color="#ffc040" stop-opacity="0"/>
    </radialGradient>
    <radialGradient id="sune" cx="0.609" cy="0.485" r="0.75">
      <stop offset="0.62" stop-color="#ff8020" stop-opacity="0"/><stop offset="1" stop-color="#f87010" stop-opacity="0.7"/>
    </radialGradient>
  </defs>
  <rect width="33" height="33" fill="#4e8cca"/>
  <g fill="#e8d050"><polygon points="20.1,16.0 60.0,13.9 60.0,18.5"/><polygon points="20.1,16.0 59.6,22.3 58.6,26.8"/><polygon points="20.1,16.0 57.4,30.3 55.5,34.5"/><polygon points="20.1,16.0 53.6,37.8 50.9,41.5"/><polygon points="20.1,16.0 48.4,44.3 44.9,47.3"/><polygon points="20.1,16.0 41.9,49.5 37.9,51.8"/><polygon points="20.1,16.0 34.4,53.3 30.0,54.7"/><polygon points="20.1,16.0 26.4,55.5 21.8,56.0"/><polygon points="20.1,16.0 18.0,55.9 13.4,55.4"/><polygon points="20.1,16.0 9.7,54.6 5.4,53.2"/><polygon points="20.1,16.0 1.9,51.6 -2.0,49.3"/><polygon points="20.1,16.0 -5.1,47.1 -8.5,44.0"/><polygon points="20.1,16.0 -11.0,41.2 -13.7,37.4"/><polygon points="20.1,16.0 -15.5,34.2 -17.4,29.9"/><polygon points="20.1,16.0 -18.5,26.4 -19.5,21.8"/><polygon points="20.1,16.0 -19.8,18.1 -19.8,13.5"/><polygon points="20.1,16.0 -19.4,9.7 -18.4,5.2"/><polygon points="20.1,16.0 -17.2,1.7 -15.3,-2.5"/><polygon points="20.1,16.0 -13.4,-5.8 -10.7,-9.5"/><polygon points="20.1,16.0 -8.2,-12.3 -4.7,-15.3"/><polygon points="20.1,16.0 -1.7,-17.5 2.3,-19.8"/><polygon points="20.1,16.0 5.8,-21.3 10.2,-22.7"/><polygon points="20.1,16.0 13.8,-23.5 18.4,-24.0"/><polygon points="20.1,16.0 22.2,-23.9 26.8,-23.4"/><polygon points="20.1,16.0 30.5,-22.6 34.8,-21.2"/><polygon points="20.1,16.0 38.3,-19.6 42.2,-17.3"/><polygon points="20.1,16.0 45.3,-15.1 48.7,-12.0"/><polygon points="20.1,16.0 51.2,-9.2 53.9,-5.4"/><polygon points="20.1,16.0 55.7,-2.2 57.6,2.1"/><polygon points="20.1,16.0 58.7,5.6 59.7,10.2"/></g>
  <rect width="33" height="33" fill="url(#sune)"/>
  <rect width="33" height="33" fill="url(#sunc)"/>
  <path d="M9,14 Q7,7 16,6.5 Q25,6 23.5,12 Q22,16.5 15,16.5 M15.5,6.8 L10.5,24 M8.5,24.5 L13.5,24.5 M16,16.5 Q19,19 21,24 Q23,28 27.5,27.5 Q29,27 28.5,25.5" fill="none" stroke="#2a5a98" stroke-width="2.6" stroke-linecap="round"/>
  <path d="M9,14 Q7,7 16,6.5 Q25,6 23.5,12 Q22,16.5 15,16.5 M15.5,6.8 L10.5,24 M8.5,24.5 L13.5,24.5 M16,16.5 Q19,19 21,24 Q23,28 27.5,27.5 Q29,27 28.5,25.5" fill="none" stroke="#78b4e8" stroke-width="1.4" stroke-linecap="round"/>
</svg>
<div class="t" style="left:56px;top:152px;font-size:32px;color:#5f5f5f;transform:scaleX(0.94);transform-origin:0 0">Risersoft</div>
<div class="a" style="left:179px;top:150px;width:1206px;height:38px;border:1px solid #a8a8a8;border-top-color:#b8b8b8;background:#fff"></div>
<div class="t" style="left:632px;top:158px;font-size:24px;font-weight:bold;color:#333;transform:scaleX(1.01);transform-origin:0 0">Test Company Ltd</div>
<div class="t" style="left:844px;top:166px;font-size:14px;color:#333;transform:scaleX(0.975);transform-origin:0 0">AAACK7126N</div>

<!-- ===== Filters ===== -->
<div class="a" style="left:701px;top:188px;width:684px;height:91px;background:#efefef"></div>
<div class="a" style="left:841px;top:188px;width:225px;height:18px;background:#fff"></div>
<div class="t" style="left:730px;top:191px;font-size:13px;color:#333">Filters</div>
<div class="t" style="left:868px;top:192px;font-size:11px;font-weight:bold;color:#333">Add</div>
<div class="t" style="left:936px;top:192px;font-size:11px;font-weight:bold;color:#333">Modify</div>
<div class="t" style="left:1008px;top:192px;font-size:11px;font-weight:bold;color:#333">Refresh</div>
<div class="a" style="left:703px;top:206px;width:682px;height:73px;background:#fff;border:2px solid #d4d4d4;border-right-width:1px;border-bottom-width:1px"></div>
<div class="a" style="left:705px;top:208px;width:660px;height:18px;background:#cce4f7;border-bottom:1px solid #d4d4d4"></div>
<div class="a" style="left:705px;top:226px;width:660px;height:18px;background:#fff;border-bottom:2px solid #d4d4d4;border-right:1px solid #d4d4d4"></div>
<div class="a" style="left:1364px;top:207px;width:1px;height:19px;background:#d0d0d0"></div>
<div class="t" style="left:710px;top:211px;font-size:12px;color:#333">Sales Invoice Type = Sale Invoice JMR</div>
<div class="t" style="left:710px;top:229px;font-size:12px;color:#333">Financial Year = 2025-2026</div>

<!-- ===== Find row ===== -->
<div class="a" style="left:19px;top:279px;width:1366px;height:29px;background:#efefef"></div>
<div class="t" style="left:219px;top:289px;font-size:11.4px;color:#111">Find On Page</div>
<div class="a" style="left:294px;top:283px;width:816px;height:21px;background:#fff;border:1px solid #a0a0a0"></div>
<div class="t" style="left:299px;top:289px;font-size:11.2px;color:#b4c4dc;transform:scaleX(1.035);transform-origin:0 0">Enter Text to Search</div>
<div class="t" style="left:1114px;top:289px;font-size:11.4px;color:#111">No Results</div>

<!-- ===== Sale Invoice header ===== -->
<div class="a" style="left:19px;top:308px;width:1366px;height:22px;border:1px solid #3a8ad6;background:#fff"></div>
<div class="t" style="left:24px;top:311px;font-size:15.5px;font-weight:bold;color:#333;transform:scaleX(1.03);transform-origin:0 0">Sale Invoice</div>

<!-- ===== Grid ===== -->
<div class="a" style="left:19px;top:332px;width:1366px;height:310px;border:1px solid #cdcdcd;border-top:2px solid #cdcdcd;background:#fff"></div>
<div class="a" style="left:20px;top:333px;width:1px;height:35px;background:#cdcdcd"></div>
<!-- rows -->
<div class="a" style="left:70px;top:369px;width:1294px;height:18px;background:#ffff00"></div>
<div class="a" style="left:70px;top:388px;width:1294px;height:17px;background:#cce4f7"></div>
<!-- horizontal lines -->
<div class="a" style="left:21px;top:368px;width:1343px;height:1px;background:#d4d4d4"></div>
<div class="a" style="left:21px;top:387px;width:1343px;height:1px;background:#d4d4d4"></div>
<div class="a" style="left:21px;top:405px;width:49px;height:1px;background:#d4d4d4"></div>
<!-- vertical lines -->
<div class="vl" style="left:69px"></div>
<div class="vl" style="left:129px"></div>
<div class="vl" style="left:204px"></div>
<div class="vl" style="left:234px"></div>
<div class="vl" style="left:421px"></div>
<div class="vl" style="left:481px"></div>
<div class="vl" style="left:541px"></div>
<div class="vl" style="left:601px"></div>
<div class="vl" style="left:676px"></div>
<div class="vl" style="left:751px"></div>
<div class="vl" style="left:826px"></div>
<div class="vl" style="left:901px"></div>
<div class="vl" style="left:983px"></div>
<div class="vl" style="left:1065px"></div>
<div class="vl" style="left:1140px"></div>
<div class="vl" style="left:1207px"></div>
<div class="vl" style="left:1274px"></div>
<div class="vl" style="left:1364px"></div>
<!-- focus rect -->
<div class="a" style="left:70px;top:387px;width:1295px;height:19px;border:1px dotted #111"></div>

<!-- grid icon -->
<svg style="left:37px;top:344px" width="15" height="13" viewBox="0 0 15 13">
  <rect x="0.5" y="0.5" width="14" height="12" fill="#fff" stroke="#707070" stroke-width="1"/>
  <rect x="10" y="0" width="5" height="13" fill="#707070"/>
  <line x1="5.2" y1="0" x2="5.2" y2="13" stroke="#707070" stroke-width="1"/>
  <line x1="0" y1="4.5" x2="10" y2="4.5" stroke="#707070" stroke-width="1"/>
  <line x1="0" y1="8.5" x2="10" y2="8.5" stroke="#707070" stroke-width="1"/>
</svg>
<svg style="left:42px;top:393px" width="6" height="9" viewBox="0 0 6 9">
  <polygon points="0,0 5.2,4.5 0,9" fill="#333"/>
</svg>

<!-- headers -->
<div class="gh" style="left:70px;width:59px;top:344px">Campus</div>
<div class="gh" style="left:130px;width:74px;top:336px">Invoice<br>Type</div>
<div class="gh" style="left:205px;width:29px;top:344px">TY</div>
<div class="gh" style="left:235px;width:186px;top:344px">Party Name</div>
<div class="gh" style="left:422px;width:59px;top:344px">Inv.No.</div>
<div class="gh" style="left:482px;width:59px;top:344px">Inv.Dt.</div>
<div class="gh" style="left:542px;width:59px;top:336px">Posting<br>Date</div>
<div class="gh" style="left:602px;width:74px;top:336px">Original<br>Inv.</div>
<div class="gh" style="left:677px;width:74px;top:344px">Amount Tot</div>
<div class="gh" style="left:752px;width:74px;top:336px">Amount<br>WV</div>
<div class="gh" style="left:827px;width:74px;top:336px">Taxable<br>Amount</div>
<div class="gh" style="left:902px;width:81px;top:336px">Balance<br>Amt.</div>
<div class="gh" style="left:984px;width:81px;top:336px">Retained<br>Amt.</div>
<div class="gh" style="left:1066px;width:74px;top:344px">WOff Amt.</div>
<div class="gh" style="left:1141px;width:66px;top:336px">Modified<br>By</div>
<div class="gh" style="left:1208px;width:66px;top:336px">Checked<br>By</div>
<div class="gh" style="left:1275px;width:89px;top:344px">Status</div>

<!-- row 1 -->
<div class="gc" style="left:75px;top:372px">Rithani</div>
<div class="gc" style="left:135px;top:372px">Invoice Ser</div>
<div class="gc" style="left:210px;top:372px">S</div>
<div class="gc" style="left:240px;top:372px">CENTRAL RAILWAY, Jabalpur</div>
<div class="gc" style="left:427px;top:372px">DR-009</div>
<div class="gc" style="left:485px;top:372px">02 Jan 2</div>
<div class="gc" style="left:545px;top:372px">02 Jan 2</div>
<div class="gc" style="left:677px;width:71px;text-align:right;top:372px">Dr 1,180.0</div>
<div class="gc" style="left:752px;width:71px;text-align:right;top:372px">Dr 1,000.0</div>
<div class="gc" style="left:827px;width:71px;text-align:right;top:372px">Dr 1,000.0</div>
<div class="gc" style="left:902px;width:78px;text-align:right;top:372px">Dr 00.00</div>
<div class="gc" style="left:1146px;top:372px">Sachin Sh</div>
<div class="gc" style="left:1280px;top:372px">Invoice Gener</div>
<!-- row 2 -->
<div class="gc" style="left:75px;top:391px">Rithani</div>
<div class="gc" style="left:135px;top:391px">Invoice Ser</div>
<div class="gc" style="left:210px;top:391px">S</div>
<div class="gc" style="left:240px;top:391px">A &amp; M Publications Pvt. Ltd., Ne</div>
<div class="gc" style="left:427px;top:391px">UP-001</div>
<div class="gc" style="left:485px;top:391px">09 May 2</div>
<div class="gc" style="left:545px;top:391px">09 May 2</div>
<div class="gc" style="left:677px;width:71px;text-align:right;top:391px">Dr 91,80,1</div>
<div class="gc" style="left:752px;width:71px;text-align:right;top:391px">Dr 77,79,7</div>
<div class="gc" style="left:827px;width:71px;text-align:right;top:391px">Dr 77,79,7</div>
<div class="gc" style="left:902px;width:78px;text-align:right;top:391px">Dr 91,80,15,</div>
<div class="gc" style="left:1146px;top:391px">Sachin Sh</div>
<div class="gc" style="left:1213px;top:391px">Sachin Sh</div>
<div class="gc" style="left:1280px;top:391px">Invoice Sent /</div>

<!-- ===== TOTALS ===== -->
<div class="a" style="left:19px;top:642px;width:1366px;height:2px;background:#f0f0f0"></div>
<div class="a" style="left:19px;top:644px;width:1366px;height:9px;border:1px solid #a8a8a8;border-bottom:none;background:#fff"></div>
<div class="t" style="left:22px;top:647px;font-size:12px;color:#333;letter-spacing:2.7px">TOTALS</div>
<div class="a" style="left:1357px;top:647px;width:5px;height:7px;border:1px solid #8a8a8a;border-right-width:2px;border-bottom:none"></div>
<svg style="left:1371px;top:648px" width="8" height="8" viewBox="0 0 8 8"><path d="M0.8,0.8 L4,4.5 L7.2,0.8 M4,4.5 L4,8" stroke="#888" stroke-width="1.8"/><rect x="2.2" y="3.5" width="3.6" height="5" fill="#888"/></svg>

<!-- ===== Context menu ===== -->
<div class="a" style="left:166px;top:400px;width:199px;height:260px;background:#fff;border:1px solid #c0c0c0"></div>
<div class="a" style="left:168px;top:511px;width:195px;height:22px;background:#cce4f7"></div>
<div class="a" style="left:199px;top:534px;width:165px;height:1px;background:#a0a0a0"></div>
<div class="a" style="left:199px;top:603px;width:165px;height:1px;background:#a0a0a0"></div>
<div class="a" style="left:199px;top:650px;width:165px;height:1px;background:#a0a0a0"></div>
<div class="mi" style="top:406px">Edit Invoice</div>
<div class="mi" style="top:428px">View Invoice</div>
<div class="mi" style="top:450px">Edit Invoice Waive</div>
<div class="mi" style="top:472px">Edit Invoice Allocation</div>
<div class="mi" style="top:494px">Generate Format Invoice</div>
<div class="mi" style="top:516px">Change Invoice Status</div>
<svg style="left:352px;top:518px" width="6" height="9" viewBox="0 0 6 9"><polygon points="0.8,0.5 5,4.4 0.8,8.3" fill="#444"/></svg>
<div class="mi" style="top:541px">Browse&nbsp; Sales Order</div>
<div class="mi" style="top:563px">Add Purchase Invoice WC</div>
<div class="mi" style="top:585px">Add Bank Guarantee</div>
<div class="mi" style="top:610px">View Customer Ledger</div>
<div class="mi" style="top:632px">View Debtors Detail</div>

<!-- submenu -->
<div class="a" style="left:364px;top:511px;width:335px;height:48px;background:#fff;border:1px solid #c0c0c0"></div>
<div class="t" style="left:398px;top:518px;font-size:12px;color:#444">Invoice Generated but Not Sent / Amount not Due</div>
<div class="t" style="left:398px;top:540px;font-size:12px;color:#444">Cancelled</div>

</body></html>
